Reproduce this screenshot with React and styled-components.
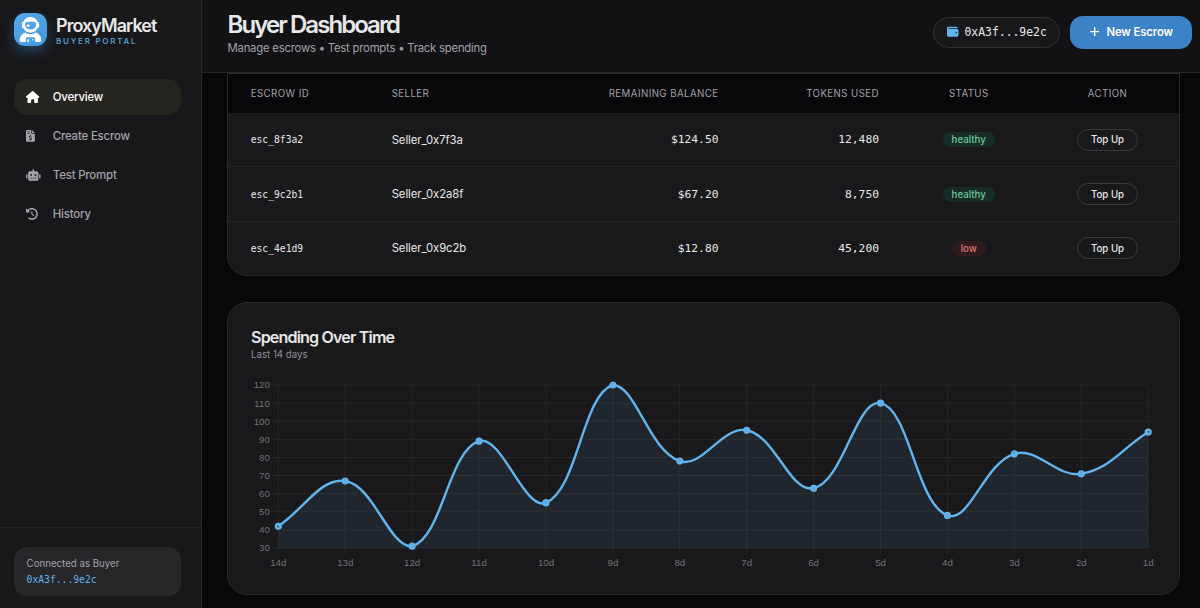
import React from "react";
import styled, { createGlobalStyle } from "styled-components";
import {
  FaUserAstronaut,
  FaHouse,
  FaFileInvoiceDollar,
  FaRobot,
  FaClockRotateLeft,
  FaWallet,
  FaPlus,
} from "react-icons/fa6";

const GlobalStyle = createGlobalStyle`
  * { box-sizing: border-box; }
  body {
    margin: 0;
    background: #08080b;
    color: #e8e8ea;
    font-family: Inter, "Liberation Sans", sans-serif;
    overflow: hidden;
  }
`;

const mono = `"DejaVu Sans Mono", "Liberation Mono", monospace`;

const Page = styled.div`
  display: flex;
  width: 1200px;
  height: 608px;
  overflow: hidden;
`;

const Sidebar = styled.aside`
  display: flex;
  flex-direction: column;
  flex: none;
  width: 202px;
  background: #18181a;
  border-right: 1px solid #252527;
`;

const Brand = styled.div`
  display: flex;
  align-items: center;
  gap: 9.5px;
  padding: 13px 13px 0 13.6px;
`;

const BrandText = styled.div`
  padding-top: 3px;
`;

const Logo = styled.div`
  display: grid;
  place-items: center;
  width: 33px;
  height: 33px;
  border-radius: 11px;
  background: linear-gradient(135deg, #56a8e8, #4498de);
  box-shadow: 0 6px 12px rgba(66, 153, 225, 0.3);
  color: #fff;
  font-size: 25px;
`;

const BrandName = styled.div`
  font-size: 18px;
  font-weight: 600;
  line-height: 20px;
  letter-spacing: -0.98px;
`;

const BrandTag = styled.div`
  font-size: 8px;
  font-weight: 500;
  line-height: 10px;
  letter-spacing: 1.75px;
  color: #5ba8df;
`;

const Nav = styled.nav`
  display: flex;
  flex-direction: column;
  gap: 3px;
  padding: 33px 20px 0 13.6px;
  flex: 1;
`;

const NavItem = styled.a`
  display: flex;
  align-items: center;
  height: 36px;
  padding-left: 12.8px;
  border-radius: 13px;
  font-size: 11.4px;
  font-weight: 500;
  letter-spacing: -0.17px;
  color: ${(p) => (p.$active ? "#fff" : "#a3a3aa")};
  background: ${(p) => (p.$active ? "#25241f" : "transparent")};
`;

const NavIcon = styled.span`
  display: flex;
  flex: none;
  width: 26.4px;

  svg {
    flex: none;
    width: ${(p) => p.$width}px;
    height: 11.9px;
  }
`;

const SidebarFooter = styled.div`
  padding: 19px 20px 12px 13.6px;
  border-top: 1px solid #252527;
`;

const Connection = styled.div`
  height: 49px;
  padding: 9px 13px;
  border-radius: 13px;
  background: #272729;
`;

const ConnectionLabel = styled.div`
  font-size: 9.7px;
  line-height: 16px;
  color: #a1a1a8;
`;

const ConnectionAddress = styled.div`
  font-family: ${mono};
  font-size: 9.7px;
  line-height: 16px;
  color: #63b3ed;
`;

const Main = styled.main`
  flex: 1;
  display: flex;
  flex-direction: column;
  min-width: 0;
`;

const Header = styled.header`
  display: flex;
  justify-content: space-between;
  flex: none;
  height: 73px;
  padding: 0 8px 0 25.5px;
  background: #121214;
  border-bottom: 1px solid #262628;
`;

const Title = styled.h1`
  margin: 10px 0 0;
  font-size: 24px;
  font-weight: 600;
  line-height: 29px;
  letter-spacing: -1.93px;
`;

const Subtitle = styled.div`
  margin-top: 1px;
  font-size: 11.3px;
  line-height: 17px;
  letter-spacing: -0.21px;
  color: #a1a1a8;
`;

const HeaderActions = styled.div`
  display: flex;
  align-items: center;
  gap: 10px;
  height: 64px;
`;

const WalletPill = styled.div`
  display: flex;
  align-items: center;
  gap: 6px;
  width: 127px;
  height: 31px;
  padding-left: 13px;
  border: 1px solid #333336;
  border-radius: 16px;
  background: #18181a;
  font-family: ${mono};
  font-size: 11.4px;

  svg {
    color: #63b3ed;
    font-size: 11.5px;
  }
`;

const PrimaryButton = styled.button`
  display: flex;
  align-items: center;
  justify-content: center;
  gap: 6px;
  width: 122px;
  height: 33px;
  padding: 0;
  border: 0;
  border-radius: 13px;
  background: #3b82c6;
  color: #fff;
  font: 600 11.3px Inter, sans-serif;
  letter-spacing: -0.1px;

  svg {
    font-size: 11.3px;
  }
`;

const Content = styled.div`
  display: flex;
  flex-direction: column;
  gap: 26px;
  padding: 0 20px 0 25px;
`;

const Card = styled.section`
  border: 1px solid #29292b;
  border-radius: ${(p) => (p.$flatTop ? "0 0 20px 20px" : "20px")};
  background: #19191b;
  overflow: hidden;
`;

const Row = styled.div`
  display: grid;
  grid-template-columns: 141px 190.5px 181.5px 160.5px 134px 1fr;
  align-items: center;
  height: ${(p) => (p.$head ? 39 : 53.4)}px;
  background: ${(p) => (p.$head ? "#08080a" : "transparent")};
  color: ${(p) => (p.$head ? "#a1a1a8" : "#e8e8ea")};

  & + & + & {
    border-top: 1px solid #252527;
    height: 54.3px;
  }
`;

const Cell = styled.div`
  padding: 0 22.5px 0 ${(p) => (p.$align ? 23 : 22.7)}px;
  text-align: ${(p) => p.$align || "left"};
  font-family: ${(p) => (p.$mono ? mono : "inherit")};
  font-size: ${(p) => p.$size || 11.3}px;
  letter-spacing: ${(p) => p.$spacing || 0}px;
  white-space: nowrap;
`;

const HeadCell = styled(Cell).attrs({ $size: 9.7, $spacing: 0.42 })``;

const Badge = styled.span`
  display: inline-block;
  padding: 0 9px;
  border-radius: 8px;
  font-size: 9.7px;
  font-weight: 500;
  line-height: 15px;
  vertical-align: middle;
  color: ${(p) => (p.$low ? "#e07474" : "#68c99a")};
  background: ${(p) => (p.$low ? "#2f1b1e" : "#182c26")};
`;

const OutlineButton = styled.button`
  width: 61px;
  height: 22px;
  padding: 0;
  border: 1px solid #3a3a3d;
  border-radius: 11px;
  background: transparent;
  color: #e8e8ea;
  font: 500 9.7px Inter, sans-serif;
`;

const ChartCard = styled(Card)`
  height: 293px;
  padding: 24px 22px 0 23px;
`;

const ChartTitle = styled.h2`
  margin: 0;
  font-size: 16.1px;
  font-weight: 600;
  line-height: 20px;
  letter-spacing: -0.84px;
`;

const ChartSubtitle = styled.div`
  font-size: 9.7px;
  line-height: 15px;
  color: #8f8f96;
`;

const ChartSvg = styled.svg`
  display: block;
  margin-top: 12px;
  overflow: visible;

  text {
    font-family: "Liberation Sans", Arial, sans-serif;
    font-size: 9.7px;
    fill: #707074;
  }
`;

const escrows = [
  { id: "esc_8f3a2", seller: "Seller_0x7f3a", balance: "$124.50", tokens: "12,480", status: "healthy" },
  { id: "esc_9c2b1", seller: "Seller_0x2a8f", balance: "$67.20", tokens: "8,750", status: "healthy" },
  { id: "esc_4e1d9", seller: "Seller_0x9c2b", balance: "$12.80", tokens: "45,200", status: "low" },
];

const spending = [42, 67, 31, 89, 55, 120, 78, 95, 63, 110, 48, 82, 71, 94];

const area = { left: 27.3, right: 897.2, top: 11, bottom: 174 };

const points = spending.map((v, i) => ({
  x: area.left + (i * (area.right - area.left)) / (spending.length - 1),
  y: area.bottom - ((v - 30) / 90) * (area.bottom - area.top),
}));

const clampY = (y) => Math.min(area.bottom, Math.max(area.top, y));

// Cubic spline with a tension of 0.4, its handles kept inside the plot area.
function splinePath(pts) {
  const handles = pts.map((p, i) => {
    const a = pts[i - 1] || p;
    const b = pts[i + 1] || p;
    const d0 = Math.hypot(p.x - a.x, p.y - a.y);
    const d1 = Math.hypot(b.x - p.x, b.y - p.y);
    const f0 = (0.4 * d0) / (d0 + d1);
    const f1 = (0.4 * d1) / (d0 + d1);
    return {
      before: [p.x - f0 * (b.x - a.x), clampY(p.y - f0 * (b.y - a.y))],
      after: [p.x + f1 * (b.x - a.x), clampY(p.y + f1 * (b.y - a.y))],
    };
  });
  return pts
    .map((p, i) =>
      i === 0
        ? `M${p.x},${p.y}`
        : `C${handles[i - 1].after} ${handles[i].before} ${p.x},${p.y}`
    )
    .join("");
}

function SpendingChart() {
  const line = splinePath(points);
  const ticks = [120, 110, 100, 90, 80, 70, 60, 50, 40, 30];
  return (
    <ChartSvg width="906" height="200">
      {ticks.map((t, i) => {
        const y = area.top + (i * (area.bottom - area.top)) / 9;
        return (
          <g key={t}>
            <line x1={area.left - 6.5} x2={area.right} y1={y} y2={y} stroke="#272725" />
            <text x={area.left - 8.5} y={y + 3.4} textAnchor="end">{t}</text>
          </g>
        );
      })}
      {points.map((p, i) => (
        <g key={i}>
          <line x1={p.x} x2={p.x} y1={area.top} y2={area.bottom + 6.5} stroke="#272725" />
          <text x={p.x} y={area.bottom + 18} textAnchor="middle">{14 - i}d</text>
        </g>
      ))}
      <path
        d={`${line}L${area.right},${area.bottom}L${area.left},${area.bottom}Z`}
        fill="rgba(99,179,237,0.09)"
      />
      <path d={line} fill="none" stroke="#63b3ed" strokeWidth="2.4" />
      {points.map((p, i) => (
        <circle
          key={i}
          cx={p.x}
          cy={p.y}
          r="2.4"
          fill="rgba(99,179,237,0.1)"
          stroke="#63b3ed"
          strokeWidth="2.4"
        />
      ))}
    </ChartSvg>
  );
}

export default function App() {
  return (
    <Page>
      <GlobalStyle />
      <Sidebar>
        <Brand>
          <Logo><FaUserAstronaut /></Logo>
          <BrandText>
            <BrandName>ProxyMarket</BrandName>
            <BrandTag>BUYER PORTAL</BrandTag>
          </BrandText>
        </Brand>
        <Nav>
          <NavItem $active><NavIcon $width={13.4}><FaHouse /></NavIcon>Overview</NavItem>
          <NavItem><NavIcon $width={8.9}><FaFileInvoiceDollar /></NavIcon>Create Escrow</NavItem>
          <NavItem><NavIcon $width={14.6}><FaRobot /></NavIcon>Test Prompt</NavItem>
          <NavItem><NavIcon $width={11.8}><FaClockRotateLeft /></NavIcon>History</NavItem>
        </Nav>
        <SidebarFooter>
          <Connection>
            <ConnectionLabel>Connected as Buyer</ConnectionLabel>
            <ConnectionAddress>0xA3f...9e2c</ConnectionAddress>
          </Connection>
        </SidebarFooter>
      </Sidebar>
      <Main>
        <Header>
          <div>
            <Title>Buyer Dashboard</Title>
            <Subtitle>Manage escrows • Test prompts • Track spending</Subtitle>
          </div>
          <HeaderActions>
            <WalletPill><FaWallet />0xA3f...9e2c</WalletPill>
            <PrimaryButton><FaPlus />New Escrow</PrimaryButton>
          </HeaderActions>
        </Header>
        <Content>
          <Card $flatTop>
            <Row $head>
              <HeadCell>ESCROW ID</HeadCell>
              <HeadCell>SELLER</HeadCell>
              <HeadCell $align="right">REMAINING BALANCE</HeadCell>
              <HeadCell $align="right">TOKENS USED</HeadCell>
              <HeadCell $align="center">STATUS</HeadCell>
              <HeadCell $align="center">ACTION</HeadCell>
            </Row>
            {escrows.map((e) => (
              <Row key={e.id}>
                <Cell $mono $size={9.7}>{e.id}</Cell>
                <Cell $spacing={-0.07}>{e.seller}</Cell>
                <Cell $mono $align="right">{e.balance}</Cell>
                <Cell $mono $align="right">{e.tokens}</Cell>
                <Cell $align="center"><Badge $low={e.status === "low"}>{e.status}</Badge></Cell>
                <Cell $align="center"><OutlineButton>Top Up</OutlineButton></Cell>
              </Row>
            ))}
          </Card>
          <ChartCard>
            <ChartTitle>Spending Over Time</ChartTitle>
            <ChartSubtitle>Last 14 days</ChartSubtitle>
            <SpendingChart />
          </ChartCard>
        </Content>
      </Main>
    </Page>
  );
}
